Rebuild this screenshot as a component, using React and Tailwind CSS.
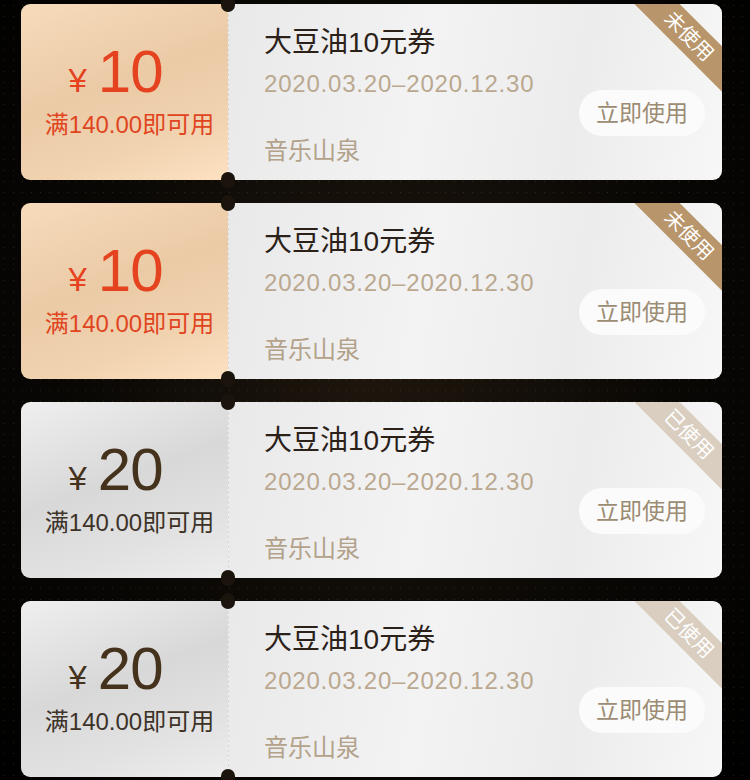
import React from "react";

const coupons = [
  { amount: "10", used: false },
  { amount: "10", used: false },
  { amount: "20", used: true },
  { amount: "20", used: true },
];

const NUM_FONT = { fontFamily: '"Liberation Sans", "Noto Sans CJK SC", sans-serif' };

function Coupon({ amount, used }) {
  return (
    <div className="relative flex h-[176px] w-full">
      <div
        className={
          "flex w-[207px] shrink-0 flex-col items-center justify-center rounded-l-[9px] pl-[4px] " +
          (used
            ? "bg-[linear-gradient(160deg,#efefef_0%,#d8d8d8_45%,#e2e2e2_75%,#ededed_100%)]"
            : "bg-[linear-gradient(160deg,#f6dbbb_0%,#ebcaa6_45%,#f1d3b0_75%,#fde1c1_100%)]")
        }
      >
        <div className={"flex items-baseline pr-[22px] " + (used ? "text-[#45321c]" : "text-[#e5421f]")}>
          <span className="mr-[11px] text-[33px] leading-none" style={NUM_FONT}>¥</span>
          <span className="text-[60px] leading-[52px] tracking-[-1px]" style={NUM_FONT}>{amount}</span>
        </div>
        <div
          className={"ml-[6px] mt-[14px] text-[24px] leading-[26px] " + (used ? "text-[#3d3228]" : "text-[#e0451f]")}
          style={NUM_FONT}
        >
          满140.00即可用
        </div>
      </div>
      <div className="relative flex-1 overflow-hidden rounded-r-[9px] border-l border-dashed border-[#d8d8d8] bg-[linear-gradient(100deg,#e9e9ea_0%,#f3f3f4_40%,#ececec_70%,#f7f7f8_100%)] pl-[35px] pt-[21px]">
        <div className="text-[28px] leading-[36px] text-[#2b2118]" style={NUM_FONT}>大豆油10元券</div>
        <div className="mt-[7px] text-[24px] leading-[32px] tracking-[0.8px] text-[#baa88f]" style={NUM_FONT}>
          2020.03.20–2020.12.30
        </div>
        <div className="mt-[36px] text-[24px] leading-[30px] text-[#b3a28a]" style={NUM_FONT}>音乐山泉</div>
        <div className="absolute right-[17px] top-[86px] flex h-[46px] w-[126px] items-center justify-center rounded-full bg-[#fbfbfb] text-[23px] text-[#9c8c73]" style={NUM_FONT}>
          立即使用
        </div>
        <div
          className={
            "absolute left-[388px] top-[14px] flex h-[32px] w-[140px] rotate-45 items-center justify-center pl-[6px] text-[20px] text-white " +
            (used ? "bg-[#d9cebf]" : "bg-[#b8956a]")
          }
          style={NUM_FONT}
        >
          {used ? "已使用" : "未使用"}
        </div>
      </div>
      <div className="absolute left-[200px] top-[-8px] h-[16px] w-[14px] rounded-full bg-[#1b140d]" />
      <div className="absolute bottom-[-8px] left-[200px] h-[16px] w-[14px] rounded-full bg-[#1b140d]" />
    </div>
  );
}

export default function App() {
  return (
    <div className="h-[780px] w-[750px] overflow-hidden bg-[radial-gradient(ellipse_at_50%_45%,#1f170e_0%,#0a0805_55%,#000_100%)]">
      <div className="h-full w-full bg-[radial-gradient(circle,rgba(180,140,70,0.22)_0.5px,transparent_1px)] bg-[length:9px_11px]">
        <div className="flex flex-col gap-[23px] pl-[21px] pr-[28px] pt-[4px]">
          {coupons.map((c, i) => (
            <Coupon key={i} {...c} />
          ))}
        </div>
      </div>
    </div>
  );
}
